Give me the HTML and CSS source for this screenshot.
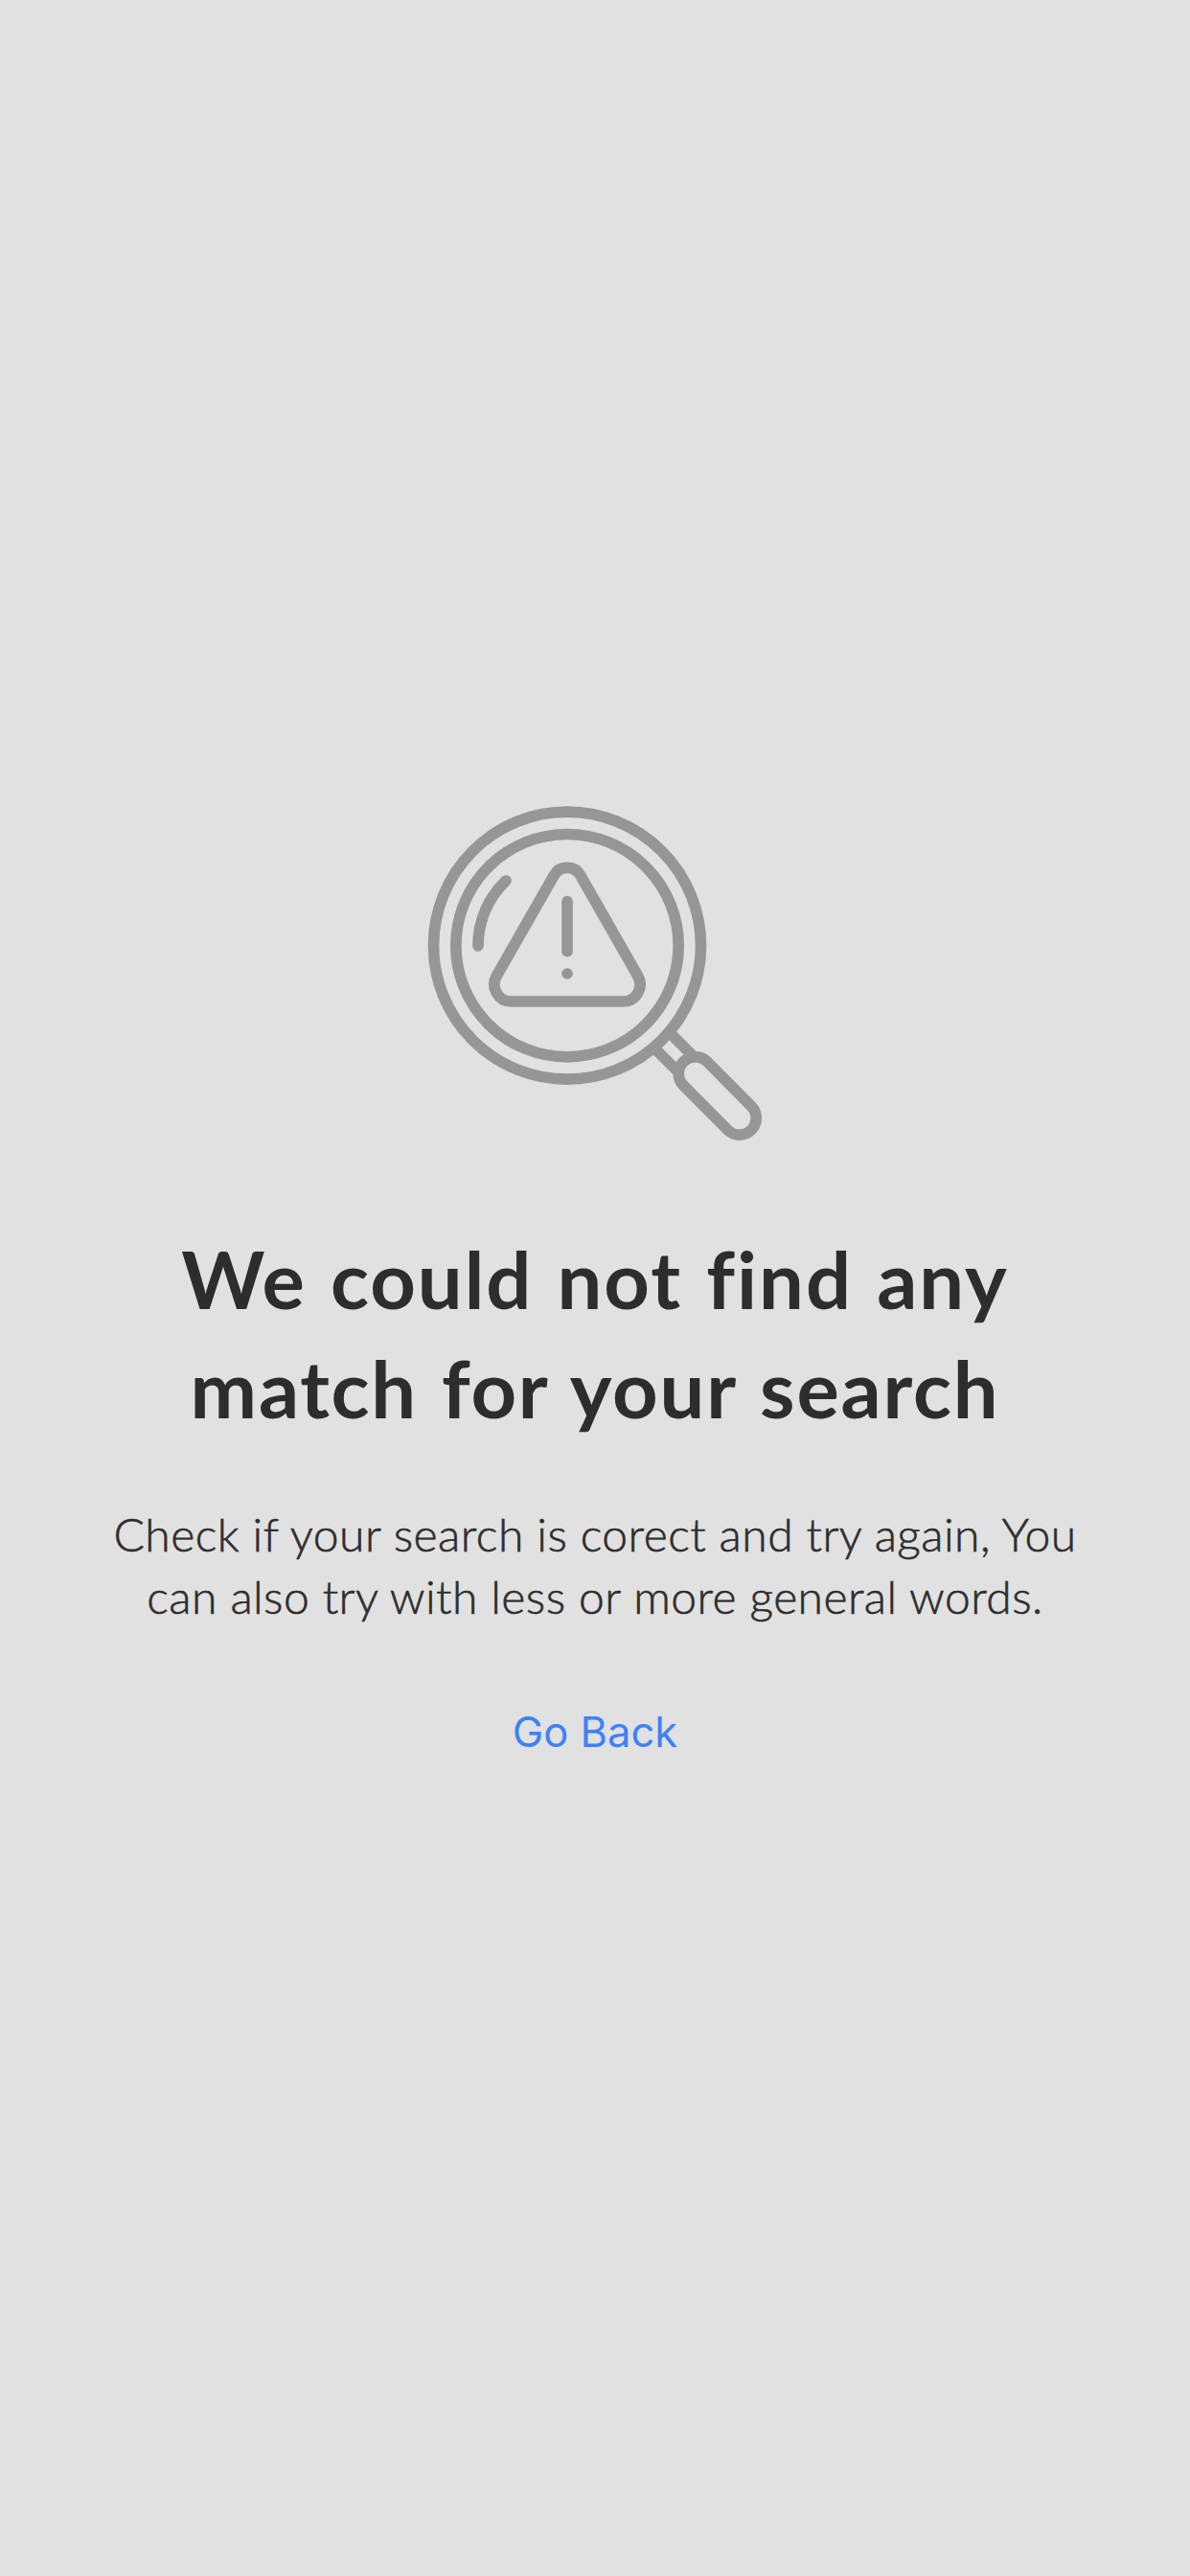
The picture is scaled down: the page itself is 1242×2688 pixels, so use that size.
FILE: index.html
```html
<!DOCTYPE html>
<html lang="en">
<head>
<meta charset="utf-8">
<title>No results</title>
<link rel="stylesheet" href="styles.css">
</head>
<body>
<main class="empty-state">
  <svg class="icon" viewBox="48 60 1050 1050" aria-hidden="true">
    <circle cx="486" cy="500" r="418.5"/>
    <circle cx="486" cy="500" r="348.5"/>
    <path class="round" d="M207 501A279 279 0 0 1 294 297"/>
    <path d="M443 283L266 593C244 630 270 675 310 675H662C702 675 728 630 706 593L529 283C510 247 462 247 443 283Z"/>
    <path class="round" d="M486 362V518"/>
    <circle class="dot" cx="486" cy="588" r="17.5"/>
    <path d="M812 778L878 844M764 826L832 894"/>
    <path d="M924.5 864L1062.500 1003A52.500 52.500 0 0 1 988 1077L850 938A52.500 52.500 0 0 1 924.500 864Z"/>
  </svg>
  <h1 class="title"><span class="title-top">We could not find any</span><br><span class="title-bottom">match for your search</span></h1>
  <p class="message">Check if your search is corect and try again, You<br>can also try with less or more general words.</p>
  <a class="back" href="#">Go Back</a>
</main>
</body>
</html>
```
FILE: styles.css
```css
body {
  margin: 0;
  background: #e1e1e1;
  color: #2d2d2d;
  font-family: Lato, sans-serif;
}

.empty-state {
  box-sizing: border-box;
  min-height: 2688px;
  padding-top: 840px;
  display: flex;
  flex-direction: column;
  align-items: center;
  text-align: center;
  white-space: nowrap;
}

.icon {
  width: 350px;
  height: 350px;
  fill: none;
  stroke: #969696;
  stroke-width: 35;
}

.icon .round {
  stroke-linecap: round;
}

.icon .dot {
  fill: #969696;
  stroke: none;
}

.title {
  margin: 87px 0 0;
  font-size: 83px;
  font-weight: 700;
  line-height: 114px;
  font-variant-ligatures: none;
  word-spacing: 3px;
}

.title-top {
  letter-spacing: 2px;
}

.title-bottom {
  letter-spacing: 1.8px;
}

.message {
  margin: 63px 0 0;
  font-size: 48px;
  font-weight: 300;
  line-height: 65px;
  letter-spacing: 0.45px;
  font-variant-ligatures: none;
  -webkit-text-stroke: 0.6px #2d2d2d;
}

.back {
  margin-top: 79px;
  color: #3c82f7;
  font-family: Inter, sans-serif;
  font-size: 43.5px;
  line-height: 60px;
  text-decoration: none;
}
```
